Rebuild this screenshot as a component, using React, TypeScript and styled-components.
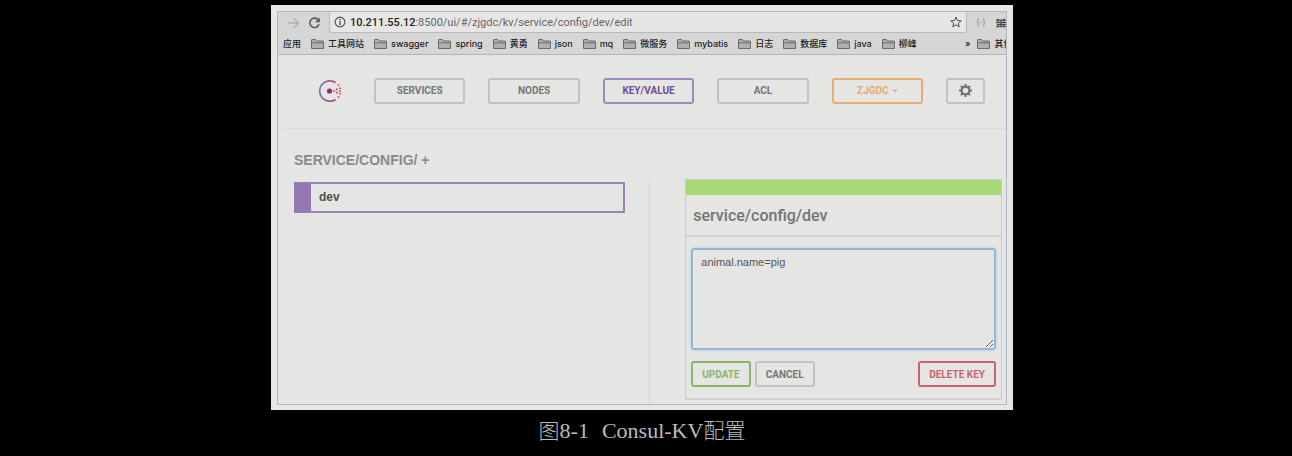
import React from "react";
import styled, { createGlobalStyle } from "styled-components";

const Global = createGlobalStyle`
  * { box-sizing: border-box; }
  body { margin: 0; background: #000; font-family: "Liberation Sans", "Noto Sans CJK SC", sans-serif; }
`;

const Page = styled.main`
  display: flex;
  justify-content: center;
  min-height: 100vh;
  padding: 5px 8px 0 0;
`;
const Figure = styled.figure`
  width: 100%;
  max-width: 742px;
  margin: 0;
`;
const Caption = styled.figcaption`
  display: flex;
  align-items: baseline;
  justify-content: center;
  padding-top: 2px;
  color: #bcbcbc;
  font: 22px/34px "Liberation Serif", serif;
`;
const Han = styled.span`
  font-family: "Noto Sans CJK SC", sans-serif;
  font-size: 21px;
  font-weight: 300;
`;
const Subject = styled.span`
  margin-left: 13px;
`;
const Mat = styled.div`
  padding: 6px 6px 5px;
  background: #e7e7e6;
`;
const Browser = styled.div`
  border: 1px solid #a9bac3;
  background: #e5e5e4;
  overflow: hidden;
`;

const Toolbar = styled.header`
  background: #d6d6d6;
  border-bottom: 1px solid #b4b4b4;
`;
const AddressRow = styled.div`
  display: flex;
  align-items: center;
  height: 21px;
  padding-left: 9px;
`;
const IconButton = styled.button<{ $color: string }>`
  display: flex;
  padding: 0;
  margin-right: 8px;
  border: 0;
  background: none;
  color: ${(p) => p.$color};
`;
const AddressBox = styled.div`
  display: flex;
  flex: 1;
  align-items: center;
  height: 21px;
  padding: 0 4px;
  gap: 4px;
  border: 1px solid #b9b9b9;
  border-top: 0;
  border-radius: 0 0 3px 3px;
  background: #e6e6e6;
  color: #4c4c4c;
`;
const Url = styled.span`
  flex: 1;
  font: 11px Roboto, sans-serif;
  color: #666;
  white-space: nowrap;
`;
const Host = styled.b`
  font-weight: 500;
  color: #222;
`;
const Extensions = styled.div`
  display: flex;
  align-items: center;
  gap: 10px;
  width: 39px;
  padding-left: 9px;
  overflow: hidden;
`;
const Bookmarks = styled.nav`
  display: flex;
  align-items: center;
  gap: 10px;
  height: 21px;
  padding-left: 5px;
  overflow: hidden;
`;
const Bookmark = styled.a`
  display: flex;
  flex: none;
  align-items: center;
  gap: 4px;
  font: 500 9px Inter, "Noto Sans CJK SC", sans-serif;
  line-height: 14px;
  color: #222;
  text-decoration: none;
  white-space: nowrap;
`;
const Overflow = styled.div`
  display: flex;
  flex: none;
  gap: 7px;
  align-items: center;
  width: 41px;
  margin-left: auto;
`;

const Nav = styled.nav`
  display: flex;
  align-items: center;
  gap: 23px;
  height: 74px;
  margin-left: 5px;
  padding: 0 21px 2px 35px;
  border-bottom: 1px solid #dadada;
`;
const Brand = styled.a`
  display: flex;
  margin-right: 9px;
`;
const Button = styled.button<{ $tone?: string; $text?: string }>`
  display: flex;
  flex: none;
  align-items: center;
  justify-content: center;
  gap: 3px;
  height: 26px;
  padding: 0 9px;
  border: 2px solid ${(p) => p.$tone || "#c2c2c2"};
  border-radius: 3px;
  background: transparent;
  color: ${(p) => p.$text || p.$tone || "#777"};
  font: bold 10px Roboto, sans-serif;
  white-space: nowrap;
`;
const Tab = styled(Button)`
  flex: 1 1 0;
`;
const SettingsButton = styled(Button)`
  width: 39px;
`;

const Columns = styled.div`
  display: grid;
  grid-template-columns: 51% 49%;
`;
const KeyColumn = styled.section`
  padding: 22px 24px 0 16px;
`;
const Heading = styled.h1`
  margin: 0 0 13px;
  font-size: 14px;
  line-height: 18px;
  color: #8a8a8a;
`;
const KeyRow = styled.a`
  display: block;
  padding: 0 8px;
  border: 2px solid #9a82b6;
  border-left: 17px solid #9478b2;
  border-radius: 1px;
  font-weight: bold;
  font-size: 12px;
  line-height: 27px;
  color: #505050;
  text-decoration: none;
`;
const EditColumn = styled.section`
  margin-top: 50px;
  padding: 0 4px 4px 35px;
  border-left: 1px solid #d6d6d6;
`;
const Card = styled.form`
  border: 1px solid #cbcbcb;
  border-bottom: 2px solid #d0d0d0;
  border-radius: 1px;
`;
const CardBar = styled.div`
  height: 15px;
  background: #a8d877;
`;
const CardTitle = styled.label`
  display: block;
  padding: 2px 7px 0;
  border-bottom: 2px solid #d3d3d3;
  font: 500 16px/38px Roboto, sans-serif;
  color: #747474;
`;
const CardBody = styled.div`
  padding: 11px 5px;
`;
const Value = styled.textarea`
  display: block;
  width: 100%;
  height: 102px;
  padding: 5px 8px;
  border: 2px solid #94b8d3;
  border-radius: 3px;
  outline: 0;
  box-shadow: 0 0 3px #a3cbe6;
  background: transparent;
  color: #555;
  font: 11px/14px "Liberation Sans", sans-serif;
  resize: vertical;
`;
const Actions = styled.div`
  display: flex;
  gap: 4px;
  padding-top: 11px;
`;
const Spacer = styled.span`
  flex: 1;
`;

const Folder = () => (
  <svg width="13" height="12" viewBox="0 0 13 12" fill="#b0b0b0" stroke="#6c6c6c" aria-hidden="true">
    <path d="M0.5 10.5V2Q0.5 1.5 1 1.5H4.5L6 3H12Q12.5 3 12.5 3.5V10.5Z" />
    <path d="M0.5 4.8H12.5" />
  </svg>
);

const Logo = () => (
  <svg width="24" height="24" viewBox="0 0 24 24" aria-label="Consul">
    <defs>
      <linearGradient id="ring" x1="0" x2="1">
        <stop offset="0" stopColor="#7c72b4" />
        <stop offset="1" stopColor="#bb4f6c" />
      </linearGradient>
    </defs>
    <path d="M17.6 3.6A10.2 10.2 0 1 0 17.6 20.4" fill="none" stroke="url(#ring)" strokeWidth="1.8" />
    <circle cx="11.5" cy="12" r="2.6" fill="#8e3174" />
    <g fill="#c4586c">
      <circle cx="15.8" cy="12" r="1" />
      <circle cx="18.8" cy="10.3" r="1.1" />
      <circle cx="18.8" cy="13.7" r="1.1" />
      <circle cx="22" cy="9.2" r="1" />
      <circle cx="22" cy="12" r="1" />
      <circle cx="22" cy="14.8" r="1" />
      <circle cx="20.5" cy="6" r="1" />
      <circle cx="20.5" cy="18" r="1" />
    </g>
  </svg>
);

const Gear = () => (
  <svg width="13" height="13" viewBox="0 0 14 14" aria-hidden="true">
    <circle cx="7" cy="7" r="4.2" fill="none" stroke="#747474" strokeWidth="2.4" />
    <path
      d="M7 0V2.6M7 11.4V14M0 7H2.6M11.4 7H14M2 2L4 4M10 10L12 12M12 2L10 4M4 10L2 12"
      stroke="#747474"
      strokeWidth="2.2"
    />
  </svg>
);

const bookmarks = ["工具网站", "swagger", "spring", "黄勇", "json", "mq", "微服务", "mybatis", "日志", "数据库", "java", "柳峰"];

export default function App() {
  return (
    <Page>
      <Global />
      <Figure>
        <Mat>
          <Browser>
            <Toolbar>
              <AddressRow>
                <IconButton $color="#b0b0b0" aria-label="Forward">
                  <svg width="13" height="12" viewBox="0 0 13 12" fill="none" stroke="currentColor" strokeWidth="1.4">
                    <path d="M1 6H11.5M6.8 1.2L11.5 6L6.8 10.8" />
                  </svg>
                </IconButton>
                <IconButton $color="#5a5a5a" aria-label="Reload">
                  <svg width="13" height="12" viewBox="0 0 13 12" fill="none" stroke="currentColor" strokeWidth="1.6">
                    <path d="M10.3 3A4.7 4.7 0 1 0 11 7.3" />
                    <path d="M11.8 0.5V5.2H7.1Z" fill="currentColor" stroke="none" />
                  </svg>
                </IconButton>
                <AddressBox>
                  <svg width="12" height="12" viewBox="0 0 12 12" fill="none" stroke="currentColor" aria-hidden="true">
                    <circle cx="6" cy="6" r="4.9" strokeWidth="1.1" />
                    <path d="M6 2.8V4.2M6 5.2V9" strokeWidth="1.4" />
                  </svg>
                  <Url>
                    <Host>10.211.55.12</Host>:8500/ui/#/zjgdc/kv/service/config/dev/edit
                  </Url>
                  <svg width="12" height="12" viewBox="0 0 12 12" fill="none" stroke="currentColor" aria-hidden="true">
                    <path d="M6 1L7.4 4.5L11.2 4.8L8.3 7.1L9.2 10.8L6 8.8L2.8 10.8L3.7 7.1L0.8 4.8L4.6 4.5Z" />
                  </svg>
                </AddressBox>
                <Extensions>
                  <svg width="12" height="11" viewBox="0 0 12 11" fill="none" stroke="#8a8a8a" aria-hidden="true">
                    <path d="M3.5 1H2.5V4.5L1 5.5L2.5 6.5V10H3.5M8.5 1H9.5V4.5L11 5.5L9.5 6.5V10H8.5M4.5 5.5H5.5M6.5 5.5H7.5" />
                  </svg>
                  <svg width="12" height="10" viewBox="0 0 12 10" stroke="#484848" fill="none" aria-hidden="true">
                    <path strokeWidth="1.4" d="M0 1.5H12M0 4.5H12M1 7H12M0 9.5H12M2.5 0V5M6 1V10M9.5 0V5M2.5 7V10M9.5 7V10" />
                  </svg>
                </Extensions>
              </AddressRow>
              <Bookmarks>
                <Bookmark href="#apps">应用</Bookmark>
                {bookmarks.map((name) => (
                  <Bookmark href="#bookmark" key={name}>
                    <Folder />
                    {name}
                  </Bookmark>
                ))}
                <Overflow>
                  <Bookmark as="span">»</Bookmark>
                  <Bookmark href="#other">
                    <Folder />
                    其他
                  </Bookmark>
                </Overflow>
              </Bookmarks>
            </Toolbar>
            <Nav>
              <Brand href="#home">
                <Logo />
              </Brand>
              <Tab>SERVICES</Tab>
              <Tab>NODES</Tab>
              <Tab $tone="#a08abd" $text="#6d4d9a">KEY/VALUE</Tab>
              <Tab>ACL</Tab>
              <Tab $tone="#e7ac70">
                ZJGDC
                <svg width="6" height="4" viewBox="0 0 6 4" fill="currentColor" aria-hidden="true">
                  <path d="M0 0.5H6L3 3.5Z" />
                </svg>
              </Tab>
              <SettingsButton aria-label="Settings">
                <Gear />
              </SettingsButton>
            </Nav>
            <Columns>
              <KeyColumn>
                <Heading>SERVICE/CONFIG/ +</Heading>
                <KeyRow href="#dev">dev</KeyRow>
              </KeyColumn>
              <EditColumn>
                <Card>
                  <CardBar />
                  <CardTitle htmlFor="value">service/config/dev</CardTitle>
                  <CardBody>
                    <Value id="value" defaultValue="animal.name=pig" spellCheck={false} />
                    <Actions>
                      <Button type="button" $tone="#8cb46a">UPDATE</Button>
                      <Button type="button">CANCEL</Button>
                      <Spacer />
                      <Button type="button" $tone="#cb646e">DELETE KEY</Button>
                    </Actions>
                  </CardBody>
                </Card>
              </EditColumn>
            </Columns>
          </Browser>
        </Mat>
        <Caption>
          <Han>图</Han>
          <span>8-1</span>
          <Subject>Consul-KV</Subject>
          <Han>配置</Han>
        </Caption>
      </Figure>
    </Page>
  );
}
